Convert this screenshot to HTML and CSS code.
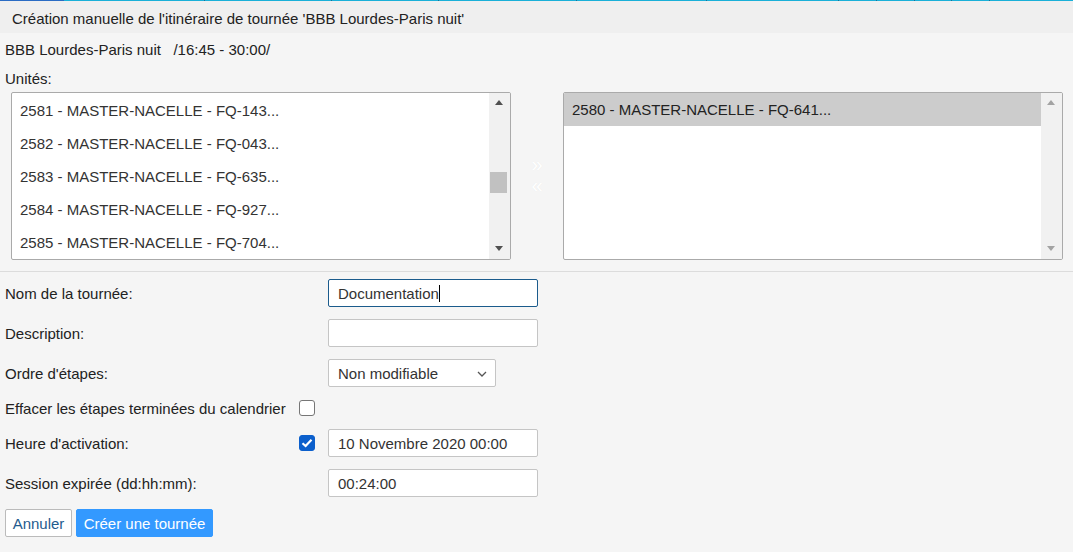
FILE: index.html
```html
<!DOCTYPE html>
<html lang="fr">
<head>
<meta charset="utf-8">
<title>Création manuelle</title>
<link rel="stylesheet" href="styles.css">
</head>
<body>
<div class="topline">
  <span class="seg seg-a"></span><span class="seg" style="width:141px"></span><span class="seg" style="width:127px"></span><span class="seg" style="width:107px"></span><span class="seg" style="width:138px"></span><span class="seg" style="width:130px"></span><span class="seg" style="width:132px"></span><span class="seg" style="width:38px"></span><span class="seg" style="width:38px"></span><span class="seg" style="width:37px"></span><span class="seg" style="width:38px"></span><span class="seg seg-last"></span>
</div>
<div class="header">Création manuelle de l'itinéraire de tournée 'BBB Lourdes-Paris nuit'</div>
<div class="content">
  <div class="route">BBB Lourdes-Paris nuit&nbsp;&nbsp;&nbsp;/16:45 - 30:00/</div>
  <div class="units-label">Unités:</div>
  <div class="lists">
    <div class="listbox">
      <div class="items">
        <div class="item">2581 - MASTER-NACELLE - FQ-143...</div>
        <div class="item">2582 - MASTER-NACELLE - FQ-043...</div>
        <div class="item">2583 - MASTER-NACELLE - FQ-635...</div>
        <div class="item">2584 - MASTER-NACELLE - FQ-927...</div>
        <div class="item">2585 - MASTER-NACELLE - FQ-704...</div>
      </div>
      <div class="scrollbar">
        <span class="arrow-up dark"></span>
        <span class="thumb"></span>
        <span class="arrow-down dark"></span>
      </div>
    </div>
    <div class="movers">
      <span class="mover">»</span>
      <span class="mover">«</span>
    </div>
    <div class="listbox">
      <div class="items">
        <div class="item selected">2580 - MASTER-NACELLE - FQ-641...</div>
      </div>
      <div class="scrollbar">
        <span class="arrow-up light"></span>
        <span class="arrow-down light"></span>
      </div>
    </div>
  </div>
  <div class="separator"></div>
  <div class="form">
    <label class="lbl">Nom de la tournée:</label>
    <span class="chk-cell"></span>
    <div class="field focused">Documentation<span class="caret"></span></div>

    <label class="lbl">Description:</label>
    <span class="chk-cell"></span>
    <div class="field"></div>

    <label class="lbl">Ordre d'étapes:</label>
    <span class="chk-cell"></span>
    <div class="select">Non modifiable
      <svg class="chev" width="10" height="6" viewBox="0 0 10 6"><path d="M1 1 L5 5 L9 1" fill="none" stroke="#555" stroke-width="1.3"/></svg>
    </div>

    <label class="lbl">Effacer les étapes terminées du calendrier</label>
    <span class="chk-cell"><span class="checkbox"></span></span>
    <span></span>

    <label class="lbl">Heure d'activation:</label>
    <span class="chk-cell"><span class="checkbox checked">
      <svg width="12" height="10" viewBox="0 0 12 10"><path d="M1.5 5.2 L4.6 8 L10.5 1.8" fill="none" stroke="#fff" stroke-width="2.2"/></svg>
    </span></span>
    <div class="field">10 Novembre 2020 00:00</div>

    <label class="lbl">Session expirée (dd:hh:mm):</label>
    <span class="chk-cell"></span>
    <div class="field">00:24:00</div>
  </div>
  <div class="buttons">
    <button class="btn btn-cancel">Annuler</button>
    <button class="btn btn-primary">Créer une tournée</button>
  </div>
</div>
</body>
</html>
```

FILE: styles.css
```css
* { box-sizing: border-box; }
html, body {
  margin: 0;
  padding: 0;
  background: #f5f5f5;
  font-family: "Liberation Sans", Arial, sans-serif;
  font-size: 15px;
  color: #222;
  width: 1073px;
  height: 552px;
  overflow: hidden;
}
.topline {
  display: flex;
  height: 1px;
  background: #1ab0d8;
}
.seg {
  display: block;
  height: 1px;
  background: #1ab0d8;
  border-right: 1px solid #1a6f96;
}
.seg-a { width: 64px; background: #2a6cc4; border-right: none; }
.seg-last { flex: 1; border-right: none; }
.header {
  height: 32px;
  background: #efefef;
  padding-left: 12px;
  display: flex;
  align-items: center;
  color: #222;
  padding-top: 3px;
}
.route {
  height: 30px;
  padding-left: 5px;
  display: flex;
  align-items: center;
  padding-top: 3px;
}
.units-label {
  height: 28px;
  padding-left: 5px;
  display: flex;
  align-items: center;
  padding-top: 3px;
}
.lists {
  display: flex;
  padding-left: 11px;
  margin-top: 1px;
  height: 168px;
}
.listbox {
  width: 500px;
  height: 168px;
  background: #fff;
  border: 1px solid #aaa;
  border-radius: 2px;
  display: flex;
  overflow: hidden;
}
.items {
  flex: 1;
  display: flex;
  flex-direction: column;
}
.item {
  height: 33px;
  line-height: 35px;
  padding-left: 8px;
  color: #333;
  white-space: nowrap;
}
.item.selected {
  background: #cccccc;
  color: #222;
  line-height: 34px;
}
.scrollbar {
  width: 21px;
  background: #f1f1f1;
  position: relative;
}
.arrow-up, .arrow-down {
  position: absolute;
  left: 6px;
  width: 0;
  height: 0;
  border-left: 4px solid transparent;
  border-right: 4px solid transparent;
}
.arrow-up { top: 7px; border-bottom: 5px solid #505050; }
.arrow-down { bottom: 8px; border-top: 5px solid #505050; }
.arrow-up.light { border-bottom-color: #a3a3a3; }
.arrow-down.light { border-top-color: #a3a3a3; }
.thumb {
  position: absolute;
  left: 1px;
  top: 79px;
  width: 17px;
  height: 21px;
  background: #c1c1c1;
}
.movers {
  width: 52px;
  display: flex;
  flex-direction: column;
  align-items: center;
  justify-content: center;
  gap: 2px;
  padding-bottom: 2px;
  color: #ffffff;
  font-size: 20px;
  line-height: 19px;
  text-shadow: 0 0 1px rgba(0,0,0,0.06);
}
.separator {
  height: 1px;
  background: #dcdcdc;
  margin-top: 11px;
}
.form {
  display: grid;
  grid-template-columns: 294px 29px 210px;
  grid-template-rows: 28px 28px 28px 18px 28px 28px;
  row-gap: 12px;
  padding-left: 5px;
  margin-top: 7px;
}
.lbl {
  display: flex;
  align-items: center;
  white-space: nowrap;
  color: #222;
  padding-top: 1px;
}
.chk-cell {
  display: flex;
  align-items: center;
}
.checkbox {
  width: 16px;
  height: 16px;
  border: 1px solid #767676;
  border-radius: 3px;
  background: #fff;
  display: flex;
  align-items: center;
  justify-content: center;
}
.checkbox.checked {
  background: #0b5fcc;
  border-color: #0b5fcc;
}
.field {
  width: 210px;
  height: 28px;
  border: 1px solid #c5c5c5;
  border-radius: 2px;
  background: #fff;
  padding-left: 9px;
  padding-top: 1px;
  display: flex;
  align-items: center;
  color: #333;
}
.field.focused {
  border-color: #1b5b8c;
}
.caret {
  display: inline-block;
  width: 1px;
  height: 17px;
  background: #000;
}
.select {
  width: 168px;
  height: 28px;
  border: 1px solid #c5c5c5;
  border-radius: 2px;
  background: #fff;
  padding-left: 9px;
  padding-right: 8px;
  padding-top: 1px;
  display: flex;
  align-items: center;
  justify-content: space-between;
  color: #333;
}
.buttons {
  display: flex;
  gap: 4px;
  padding-left: 5px;
  margin-top: 12px;
}
.btn {
  height: 28px;
  font-family: "Liberation Sans", Arial, sans-serif;
  font-size: 15px;
  border-radius: 2px;
  padding: 0 4px;
  cursor: pointer;
}
.btn-cancel {
  width: 67px;
  background: #fff;
  border: 1px solid #bbb;
  color: #1f5b8e;
}
.btn-primary {
  width: 137px;
  background: #3399ff;
  border: 1px solid #3399ff;
  color: #fff;
}
```
